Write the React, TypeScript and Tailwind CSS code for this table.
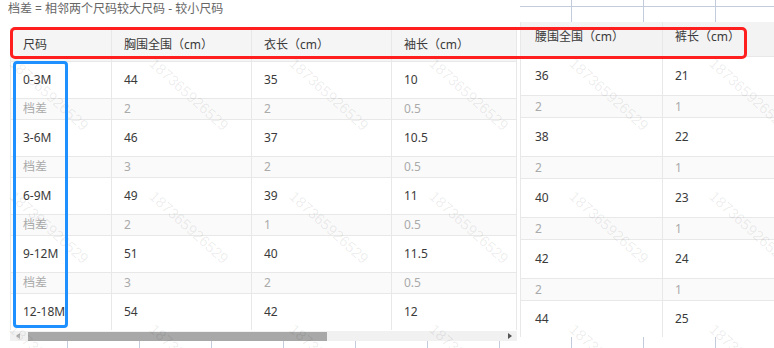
import React from 'react';

const leftRows = [
  { size: '0-3M', chest: '44', len: '35', sleeve: '10', gap: false },
  { size: '档差', chest: '2', len: '2', sleeve: '0.5', gap: true },
  { size: '3-6M', chest: '46', len: '37', sleeve: '10.5', gap: false },
  { size: '档差', chest: '3', len: '2', sleeve: '0.5', gap: true },
  { size: '6-9M', chest: '49', len: '39', sleeve: '11', gap: false },
  { size: '档差', chest: '2', len: '1', sleeve: '0.5', gap: true },
  { size: '9-12M', chest: '51', len: '40', sleeve: '11.5', gap: false },
  { size: '档差', chest: '3', len: '2', sleeve: '0.5', gap: true },
  { size: '12-18M', chest: '54', len: '42', sleeve: '12', gap: false },
];

const rightRows = [
  { waist: '36', pants: '21', gap: false },
  { waist: '2', pants: '1', gap: true },
  { waist: '38', pants: '22', gap: false },
  { waist: '2', pants: '1', gap: true },
  { waist: '40', pants: '23', gap: false },
  { waist: '2', pants: '1', gap: true },
  { waist: '42', pants: '24', gap: false },
  { waist: '2', pants: '1', gap: true },
  { waist: '44', pants: '25', gap: false },
];

const cell = 'flex items-center border-b border-l border-[#e8e8e8] pl-[12px]';

export default function App() {
  return (
    <div className="relative w-[774px] h-[348px] overflow-hidden bg-white font-['Noto_Sans','Noto_Sans_CJK_SC',sans-serif] text-[12px] text-[#3a3a3a]">
      <div className="flex h-full">
        {/* left size table */}
        <div className="flex flex-col w-[520px] shrink-0">
          <div className="h-[28px] pl-[8px] pt-[1px] text-[12px] leading-[16px] text-[#666]">
            档差 = 相邻两个尺码较大尺码 - 较小尺码
          </div>
          <div className="ml-[10px] w-[507px] grid grid-cols-[101px_140px_140px_126px] leading-none">
            <div className={cell + ' h-[34px] bg-[#f5f5f5]'}>尺码</div>
            <div className={cell + ' bg-[#f5f5f5]'}>胸围全围（cm）</div>
            <div className={cell + ' bg-[#f5f5f5]'}>衣长（cm）</div>
            <div className={cell + ' bg-[#f5f5f5] border-r'}>袖长（cm）</div>
            {leftRows.map((r, i) => {
              const row = r.gap
                ? ' h-[21px] bg-[#fafafa] text-[#aaa]'
                : i === leftRows.length - 1
                ? ' h-[36px] border-b-0 bg-white'
                : ' h-[37px] bg-white';
              return (
                <React.Fragment key={i}>
                  <div className={cell + row}>{r.size}</div>
                  <div className={cell + row}>{r.chest}</div>
                  <div className={cell + row}>{r.len}</div>
                  <div className={cell + row + ' border-r'}>{r.sleeve}</div>
                </React.Fragment>
              );
            })}
          </div>
          <div className="ml-[10px] mt-[1px] w-[507px] h-[10px] bg-[#f1f1f1] flex items-center">
            <div className="ml-[6px] w-0 h-0 border-y-[3px] border-y-transparent border-r-[4px] border-r-[#b0b0b0]" />
            <div className="ml-[8px] w-[299px] h-[9px] bg-[#a8a8a8]" />
            <div className="ml-[181px] w-0 h-0 border-y-[3px] border-y-transparent border-l-[4px] border-l-[#555]" />
          </div>
          <div className="flex flex-1">
            <div className="w-[68px] border-r border-[#c3cbdc]" />
            <div className="w-[72px] border-r border-[#c3cbdc]" />
            <div className="w-[72px] border-r border-[#c3cbdc]" />
            <div className="w-[72px] border-r border-[#c3cbdc]" />
            <div className="w-[72px] border-r border-[#c3cbdc]" />
            <div className="w-[72px] border-r border-[#c3cbdc]" />
            <div className="w-[72px] border-r border-[#c3cbdc]" />
          </div>
        </div>

        {/* right size table */}
        <div className="flex flex-col flex-1">
          <div className="flex h-[22px] shrink-0">
            <div className="w-[52px] border-r border-[#c3cbdc]"><div className="h-[7px] border-b border-[#c3cbdc]" /></div>
            <div className="w-[72px] border-r border-[#c3cbdc]"><div className="h-[7px] border-b border-[#c3cbdc]" /></div>
            <div className="w-[72px] border-r border-[#c3cbdc]"><div className="h-[7px] border-b border-[#c3cbdc]" /></div>
            <div className="w-[72px] border-r border-[#c3cbdc]"><div className="h-[7px] border-b border-[#c3cbdc]" /></div>
          </div>
          <div className="grid grid-cols-[142px_1fr] leading-none">
            <div className={cell + ' h-[35px] pl-[14px] pb-[5px] bg-[#f3f3f3]'}>腰围全围（cm）</div>
            <div className={cell + ' pl-[11px] pb-[5px] bg-[#f3f3f3]'}>裤长（cm）</div>
            {rightRows.map((r, i) => {
              const row = r.gap
                ? ' h-[22px] bg-[#fafafa] text-[#aaa]'
                : i === rightRows.length - 1
                ? ' h-[36px] border-b-0 bg-white'
                : ' h-[39px] bg-white';
              return (
                <React.Fragment key={i}>
                  <div className={cell + row + ' pl-[14px]'}>{r.waist}</div>
                  <div className={cell + row + ' pl-[11px]'}>{r.pants}</div>
                </React.Fragment>
              );
            })}
          </div>
          <div className="flex flex-1">
            <div className="w-[52px] border-r border-[#c3cbdc]" />
            <div className="w-[72px] border-r border-[#c3cbdc]" />
            <div className="w-[72px] border-r border-[#c3cbdc]" />
          </div>
        </div>
      </div>

      {/* watermark */}
      <div className="pointer-events-none absolute left-[17px] top-[55px] grid grid-cols-[repeat(6,140px)] grid-rows-[repeat(3,133px)] text-[15px] leading-none text-[#000]/[0.08] font-['Liberation_Sans',sans-serif]">
        {Array.from({ length: 18 }).map((_, i) => (
          <div key={i} className="relative">
            <span className="absolute left-0 top-0 origin-top-left rotate-[42deg] whitespace-nowrap">187365926529</span>
          </div>
        ))}
      </div>

      {/* highlight boxes */}
      <div className="pointer-events-none absolute left-[10px] top-[27px] w-[737px] h-[32px] border-[3px] border-[#ff1f1f] rounded-[5px]" />
      <div className="pointer-events-none absolute left-[13px] top-[61px] w-[55px] h-[267px] border-[3px] border-[#1e90ff] rounded-[4px]" />
    </div>
  );
}
